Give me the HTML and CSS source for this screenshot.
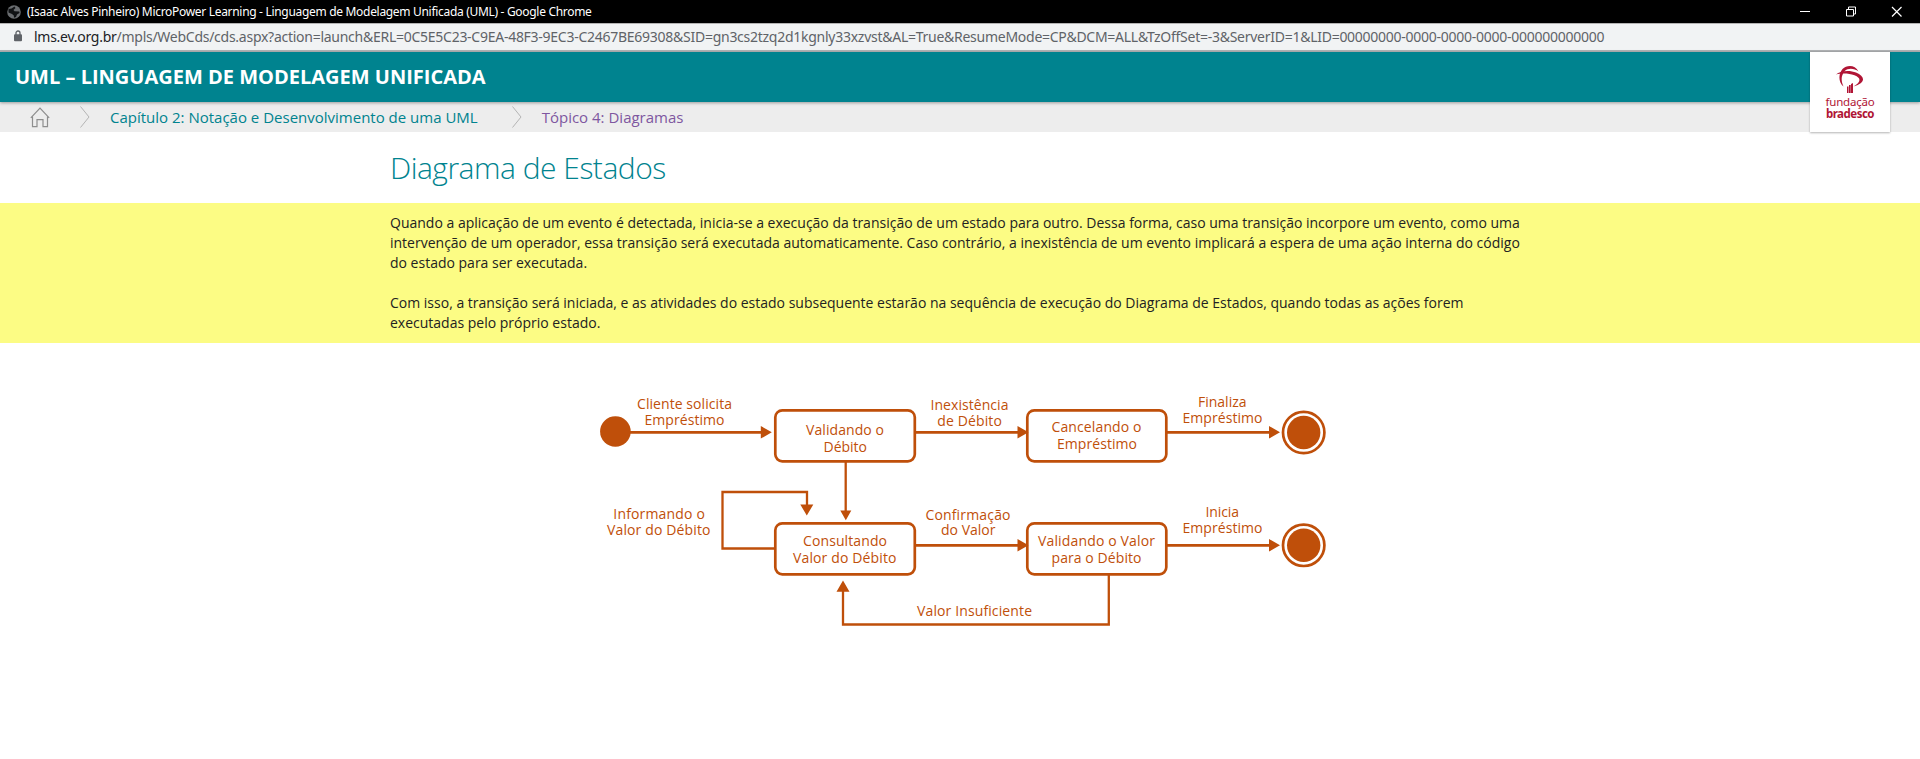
FILE: index.html
```html
<!DOCTYPE html>
<html lang="pt-BR">
<head>
<meta charset="utf-8">
<title>MicroPower Learning</title>
<link rel="stylesheet" href="styles.css">
</head>
<body>
<div class="titlebar">
  <svg class="globe" width="14" height="14" viewBox="0 0 14 14"><circle cx="7" cy="7" r="6.8" fill="#6a6d70"/><path d="M1.500 4L4.500 3.500 7.500 1.500 8.500 3 6.500 5 7.500 6.300 12.300 6.500 12.500 8 10 9.500 9 12 7 12.800 6.800 10.500 5 9 1.500 7.500z" fill="#101214"/></svg>
  <span class="window-title">(Isaac Alves Pinheiro) MicroPower Learning - Linguagem de Modelagem Unificada (UML) - Google Chrome</span>
  <svg class="controls" width="110" height="20" viewBox="0 0 110 20" fill="none" stroke="#fff"><path d="M0 9.500H10M46.500 7.500H53.500V14H46.500zM48.500 7V5H55.500V12H54"/><path d="M92 5L101.500 14.500M101.500 5L92 14.500" stroke-width="1.2"/></svg>
</div>
<div class="addressbar">
  <svg class="lock" width="8" height="12" viewBox="0 0 8 12"><path d="M2 5V3a2 2 0 0 1 4 0v2" fill="none" stroke="#5f6368" stroke-width="1.3"/><rect y="4.300" width="8" height="7" rx="1" fill="#5f6368"/></svg>
  <span class="url"><span class="domain">lms.ev.org.br</span><span class="path">/mpls/WebCds/cds.aspx?action=launch&amp;ERL=0C5E5C23-C9EA-48F3-9EC3-C2467BE69308&amp;SID=gn3cs2tzq2d1kgnly33xzvst&amp;AL=True&amp;ResumeMode=CP&amp;DCM=ALL&amp;TzOffSet=-3&amp;ServerID=1&amp;LID=00000000-0000-0000-0000-000000000000</span></span>
</div>
<header class="course">
  <h1 class="course-title">UML – LINGUAGEM DE MODELAGEM UNIFICADA</h1>
  <div class="logo">
    <svg width="30" height="30" viewBox="0 0 30 30" fill="#b01535"><path d="M23.500 6.500C20 -.500 12 -.500 7.500 4 3 9.500 3.500 17 8.500 21.500 6 16 5.800 11 9.500 6.200 13.500 2.500 19.500 3.500 23.500 6.500z"/><path d="M1 9.500C5 5.500 15 4.800 21 7.500 30.500 11.500 31 18 18.500 21.500 26 17 26.500 13 19.500 10.300 13 7.800 6 8.200 1 9.500z"/><path d="M12 21.500h1.500V28H12zM14 20h1.700v8h-1.700zM16 19l2-1v10h-2z"/></svg>
    <span class="logo-top">fundação</span>
    <span class="logo-bottom">bradesco</span>
  </div>
</header>
<nav class="crumbs">
  <svg class="home" width="20" height="21" viewBox="0 0 20 21" fill="none" stroke="#8e8e8e" stroke-width="1.200"><path d="M.8 10.800L10 1.200 19.200 10.800M2.500 9.800V19.700H7V12.700H13V19.700H17.500V9.800"/></svg>
  <svg class="sep sep-one" width="10" height="22" viewBox="0 0 10 22" fill="none" stroke="#b4b4b4"><path d="M.5 .500L9 11 .5 21.500"/></svg>
  <span class="chapter">Capítulo 2: Notação e Desenvolvimento de uma UML</span>
  <svg class="sep sep-two" width="10" height="22" viewBox="0 0 10 22" fill="none" stroke="#b4b4b4"><path d="M.5 .500L9 11 .5 21.500"/></svg>
  <span class="topic">Tópico 4: Diagramas</span>
</nav>
<main>
  <h2 class="heading">Diagrama de Estados</h2>
  <section class="note">
    <p>Quando a aplicação de um evento é detectada, inicia-se a execução da transição de um estado para outro. Dessa forma, caso uma transição incorpore um evento, como uma<br>intervenção de um operador, essa transição será executada automaticamente. Caso contrário, a inexistência de um evento implicará a espera de uma ação interna do código<br>do estado para ser executada.</p>
    <p>Com isso, a transição será iniciada, e as atividades do estado subsequente estarão na sequência de execução do Diagrama de Estados, quando todas as ações forem<br>executadas pelo próprio estado.</p>
  </section>
  <svg class="diagram" width="740" height="250" viewBox="590 380 740 250">
    <circle class="solid" cx="615.400" cy="431.500" r="15.300"/>
    <g class="wire">
      <path d="M630 432.300H762M916 432.300H1019M1167 432.300H1270M916 545.300H1019M1167 545.300H1270"/>
      <path class="thin" d="M845.700 462V512M775 548.500H722.500V492H807V506M1108.800 575V624.500H843V590"/>
      <rect x="775.300" y="410.300" width="139.500" height="51" rx="7"/>
      <rect x="1027.300" y="410.300" width="139" height="51" rx="7"/>
      <rect x="775.300" y="523.300" width="139.500" height="51" rx="7"/>
      <rect x="1027.300" y="523.300" width="139" height="51" rx="7"/>
      <circle cx="1303.700" cy="432.500" r="20.700"/>
      <circle cx="1303.700" cy="545.300" r="20.700"/>
    </g>
    <g class="solid">
      <circle cx="1303.700" cy="432.500" r="16.700"/><circle cx="1303.700" cy="545.300" r="16.700"/>
      <path d="M760.800 426L771.800 432.300 760.800 438.600zM1017.500 426L1028.500 432.300 1017.500 438.600zM1269 426L1280 432.300 1269 438.600zM1017.500 539L1028.500 545.300 1017.500 551.600zM1269 539L1280 545.300 1269 551.600z"/>
      <path d="M840.300 510.500H851.300L845.800 520.300zM800.300 504.500H813.300L806.800 515.500zM836.500 591.800H849.500L843 580.500z"/>
    </g>
    <g class="label">
      <text x="637" y="409" textLength="95">Cliente solicita</text><text x="644.500" y="424.800" textLength="80">Empréstimo</text>
      <text x="806" y="434.700" textLength="78">Validando o</text><text x="823.500" y="451.700" textLength="43.500">Débito</text>
      <text x="930.500" y="410.300" textLength="78">Inexistência</text><text x="937.300" y="426" textLength="64.500">de Débito</text>
      <text x="1051.500" y="432" textLength="90">Cancelando o</text><text x="1057" y="449" textLength="80">Empréstimo</text>
      <text x="1198" y="407" textLength="48.500">Finaliza</text><text x="1182.500" y="423" textLength="80">Empréstimo</text>
      <text x="613.300" y="519" textLength="91.500">Informando o</text><text x="607" y="535" textLength="103.500">Valor do Débito</text>
      <text x="803" y="546" textLength="84">Consultando</text><text x="793" y="563" textLength="103.500">Valor do Débito</text>
      <text x="925.500" y="519.500" textLength="85">Confirmação</text><text x="941" y="535" textLength="54.500">do Valor</text>
      <text x="1038" y="545.500" textLength="117">Validando o Valor</text><text x="1051.500" y="562.500" textLength="90">para o Débito</text>
      <text x="1205.500" y="517" textLength="33.500">Inicia</text><text x="1182.500" y="533" textLength="80">Empréstimo</text>
      <text x="917" y="616" textLength="115">Valor Insuficiente</text>
    </g>
  </svg>
</main>
</body>
</html>
```
FILE: styles.css
```css
* { box-sizing: border-box; }
body { margin: 0; background: #fff; font-family: "Open Sans", "Noto Sans", sans-serif; }
.titlebar { display: flex; align-items: center; height: 23px; padding: 0 10px 0 7px; background: #000; color: #fff; }
.window-title { margin-left: 6px; font: 12px/23px "Noto Sans", sans-serif; letter-spacing: -0.31px; white-space: nowrap; }
.controls { margin-left: auto; }
.addressbar { display: flex; align-items: center; height: 29px; padding-left: 14px; background: #f1f3f4; border-top: 1px solid #b3b3b3; border-bottom: 2px solid #b0b2b4; }
.lock { margin-bottom: 2px; }
.url { margin-left: 12px; font: 14px/26px "Noto Sans", sans-serif; letter-spacing: -0.265px; white-space: nowrap; color: #5f6368; }
.domain { color: #202124; }
.course { display: flex; justify-content: space-between; align-items: flex-start; position: relative; z-index: 1; height: 50px; padding: 0 30px 0 15px; background: #00838f; box-shadow: 0 1px 3px rgba(0,0,0,.35); }
.course-title { margin: 0; font-size: 20px; line-height: 50px; font-weight: 700; color: #fff; white-space: nowrap; }
.logo { display: flex; flex-direction: column; align-items: center; width: 80px; height: 80px; padding-top: 13px; background: #fff; color: #b01535; box-shadow: 0 1px 2px rgba(0,0,0,.3); }
.logo-top, .logo-bottom { font-family: "Noto Sans", sans-serif; font-size: 11.500px; line-height: 12px; letter-spacing: -0.2px; }
.logo-top { margin-top: 1px; }
.logo-bottom { font-weight: 700; letter-spacing: -0.5px; }
.crumbs { display: flex; align-items: center; height: 30px; padding-left: 30px; background: #ededed; font-size: 15px; line-height: 30px; white-space: nowrap; }
.sep-one { margin: 0 20px 0 30px; }
.sep-two { margin: 0 20px 0 34px; }
.chapter { color: #00838f; }
.topic { color: #7e57a0; }
.heading { margin: 0; padding-left: 390px; height: 71px; font-size: 30px; line-height: 72px; font-weight: 300; letter-spacing: -0.5px; color: #00838f; }
.note { height: 140px; padding: 10px 0 0 390px; background: #fcfc84; color: #222; font-size: 14px; line-height: 20px; white-space: nowrap; }
.note p { margin: 0 0 20px; }
.diagram { display: block; margin: 37px 0 0 590px; }
.wire { fill: none; stroke: #bf4f0a; stroke-width: 2.700; }
.thin { stroke-width: 2.300; }
.solid { fill: #bf4f0a; }
.label { fill: #bf4f0a; font-size: 14px; }
```
